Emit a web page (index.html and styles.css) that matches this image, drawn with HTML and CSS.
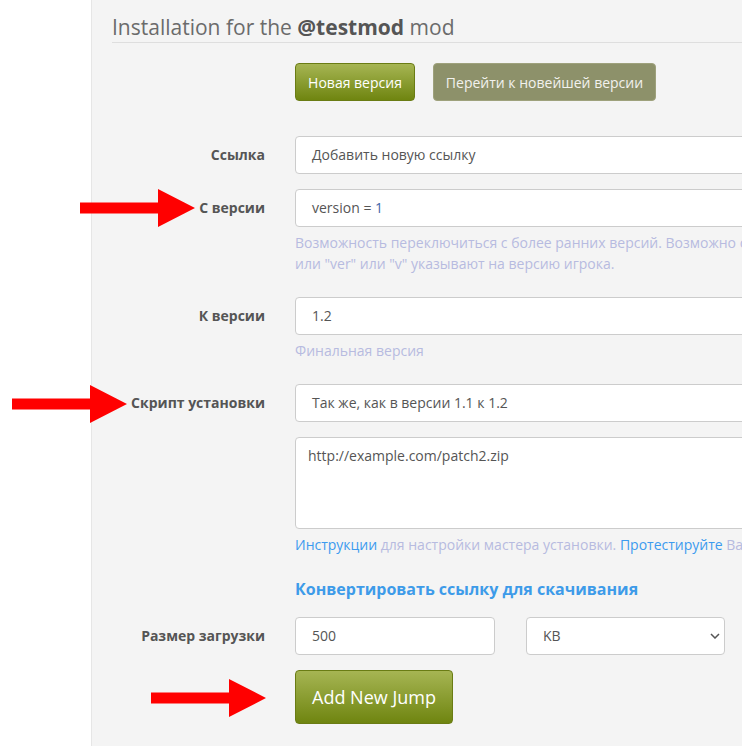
FILE: index.html
```html
<!DOCTYPE html>
<html>
<head>
<meta charset="utf-8">
<link rel="stylesheet" href="styles.css">
</head>
<body>
<div class="page">
  <aside class="side"></aside>
  <main class="panel">
    <h1 class="title">Installation for the <b>@testmod</b> mod</h1>
    <div class="form">
      <div class="row top-actions">
        <div class="label"></div>
        <div class="field btns">
          <button class="btn btn-green">Новая версия</button>
          <button class="btn btn-olive">Перейти к новейшей версии</button>
        </div>
      </div>
      <div class="row first">
        <div class="label">Ссылка</div>
        <div class="field"><div class="input">Добавить новую ссылку</div></div>
      </div>
      <div class="row">
        <div class="label">С версии</div>
        <div class="field">
          <div class="input">version = <span class="num">1</span></div>
          <p class="help">Возможность переключиться с более ранних версий. Возможно с версии ниже. Используйте "version"<br>или "ver" или "v" указывают на версию игрока.</p>
        </div>
      </div>
      <div class="row">
        <div class="label">К версии</div>
        <div class="field">
          <div class="input">1.2</div>
          <p class="help">Финальная версия</p>
        </div>
      </div>
      <div class="row">
        <div class="label">Скрипт установки</div>
        <div class="field">
          <div class="input">Так же, как в версии 1.1 к 1.2</div>
          <div class="textarea">http://example.com/patch2.zip</div>
          <p class="help"><span class="link">Инструкции</span> для настройки мастера установки. <span class="link">Протестируйте</span> Ваш скрипт установки.</p>
        </div>
      </div>
      <div class="row">
        <div class="label"></div>
        <div class="field"><div class="convert">Конвертировать ссылку для скачивания</div></div>
      </div>
      <div class="row size-row">
        <div class="label">Размер загрузки</div>
        <div class="field size-fields">
          <div class="input small">500</div>
          <div class="input select">KB
            <svg class="chev" width="10" height="6" viewBox="0 0 10 6"><path d="M1 1l4 4 4-4" fill="none" stroke="#555" stroke-width="1.5"/></svg>
          </div>
        </div>
      </div>
      <div class="row">
        <div class="label"></div>
        <div class="field"><button class="btn btn-green btn-big">Add New Jump</button></div>
      </div>
    </div>
  </main>
  <svg class="arrow a1" width="115" height="38" viewBox="0 0 115 38"><polygon points="0,13.5 78,13.5 78,0 115,19 78,38 78,24.5 0,24.5" fill="#ff0000"/></svg>
  <svg class="arrow a2" width="115" height="38" viewBox="0 0 115 38"><polygon points="0,13.5 78,13.5 78,0 115,19 78,38 78,24.5 0,24.5" fill="#ff0000"/></svg>
  <svg class="arrow a3" width="115" height="38" viewBox="0 0 115 38"><polygon points="0,13.5 78,13.5 78,0 115,19 78,38 78,24.5 0,24.5" fill="#ff0000"/></svg>
</div>
</body>
</html>
```

FILE: styles.css
```css
html, body {
  margin: 0;
  padding: 0;
  overflow: hidden;
  background: #ffffff;
}
body {
  font-family: "Open Sans", "Liberation Sans", sans-serif;
  font-size: 14px;
  color: #555;
}
.page {
  position: relative;
  display: flex;
  width: 1100px;
  height: 746px;
}
.side {
  width: 91px;
  flex: none;
  background: #fff;
  border-right: 1px solid #e6e6e6;
}
.panel {
  flex: 1;
  background: #f4f4f4;
  padding: 13px 0 0 20px;
}
.title {
  margin: 0;
  font-size: 21px;
  font-weight: 400;
  line-height: 29px;
  color: #6b6b6b;
  border-bottom: 1px solid #dedede;
  padding-bottom: 0;
}
.title b {
  font-weight: 700;
  color: #555;
}
.form {
  display: flex;
  flex-direction: column;
}
.row {
  display: grid;
  grid-template-columns: 153px 500px;
  column-gap: 30px;
  margin-top: 15px;
  align-items: start;
}
.top-actions {
  margin-top: 20px;
}
.row.first {
  margin-top: 35px;
}
.size-row {
  margin-top: 17px;
}
.label {
  text-align: right;
  font-weight: 700;
  line-height: 38px;
  color: #555;
}
.btns {
  display: flex;
  gap: 18px;
}
.btn {
  font-family: "Open Sans", "Liberation Sans", sans-serif;
  font-size: 14px;
  height: 38px;
  border-radius: 4px;
  color: #fff;
  padding: 0;
  white-space: nowrap;
  cursor: pointer;
}
.btn-green {
  background: linear-gradient(#a6b553, #6f8510);
  border: 1px solid #6a7c14;
  width: 120px;
}
.btn-olive {
  background: #8d916a;
  border: 1px solid #9ea17c;
  color: #f2f2ee;
  width: 223px;
}
.btn-big {
  height: 54px;
  width: 158px;
  font-size: 18px;
}
.input {
  box-sizing: border-box;
  height: 38px;
  background: #fff;
  border: 1px solid #cccccc;
  border-radius: 4px;
  padding: 0 16px;
  line-height: 36px;
  color: #555;
  white-space: nowrap;
  overflow: hidden;
}
.num {
  color: #3f66a8;
}
.textarea {
  box-sizing: border-box;
  height: 92px;
  margin-top: 15px;
  background: #fff;
  border: 1px solid #cccccc;
  border-radius: 4px;
  padding: 7px 12px;
  line-height: 22px;
  color: #555;
}
.help {
  margin: 5px 0 8px;
  line-height: 21px;
  color: #b7bbe0;
  white-space: nowrap;
}
.link {
  color: #3c9bef;
}
.convert {
  font-size: 16px;
  font-weight: 700;
  line-height: 22px;
  color: #3d9be9;
  white-space: nowrap;
}
.size-fields {
  display: flex;
  gap: 31px;
}
.input.small {
  width: 200px;
}
.input.select {
  width: 199px;
  position: relative;
}
.chev {
  position: absolute;
  right: 4px;
  top: 15px;
}
.arrow {
  position: absolute;
}
.a1 { left: 80px; top: 189px; }
.a2 { left: 12px; top: 385px; }
.a3 { left: 151px; top: 679px; }
```
